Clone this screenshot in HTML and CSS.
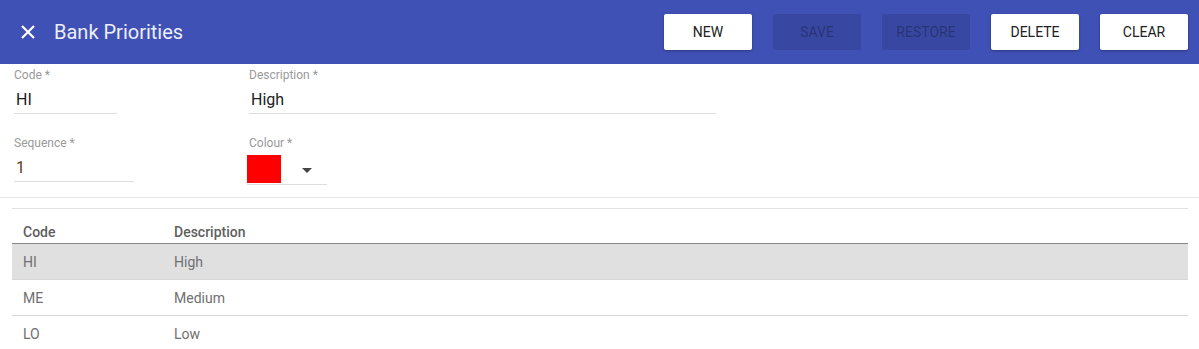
FILE: index.html
```html
<!DOCTYPE html>
<html>
<head>
<meta charset="utf-8">
<link rel="stylesheet" href="styles.css">
</head>
<body>
<header class="toolbar">
  <div class="title-wrap">
    <svg class="close-icon" width="16" height="16" viewBox="0 0 16 16"><path d="M2 2 L14 14 M14 2 L2 14" stroke="#fff" stroke-width="2.2" fill="none"/></svg>
    <span class="title">Bank Priorities</span>
  </div>
  <div class="actions">
    <button class="btn">NEW</button>
    <button class="btn disabled">SAVE</button>
    <button class="btn disabled">RESTORE</button>
    <button class="btn">DELETE</button>
    <button class="btn">CLEAR</button>
  </div>
</header>
<section class="form">
  <div class="row">
    <div class="field f-code"><label>Code *</label><div class="value">HI</div></div>
    <div class="field f-desc"><label>Description *</label><div class="value">High</div></div>
  </div>
  <div class="row">
    <div class="field f-seq"><label>Sequence *</label><div class="value">1</div></div>
    <div class="field f-colour"><label>Colour *</label>
      <div class="colour-select"><span class="swatch"></span><span class="arrow"></span></div>
    </div>
  </div>
</section>
<section class="grid">
  <div class="grid-row head"><div class="c1">Code</div><div class="c2">Description</div></div>
  <div class="grid-row selected"><div class="c1">HI</div><div class="c2">High</div></div>
  <div class="grid-row"><div class="c1">ME</div><div class="c2">Medium</div></div>
  <div class="grid-row"><div class="c1">LO</div><div class="c2">Low</div></div>
</section>
</body>
</html>
```
FILE: styles.css
```css
* { box-sizing: border-box; }
body {
  margin: 0;
  background: #fff;
  font-family: Roboto, "Liberation Sans", Arial, sans-serif;
}
.toolbar {
  height: 64px;
  background: #3f51b5;
  display: flex;
  align-items: center;
  justify-content: space-between;
  padding: 0 11px 0 20px;
}
.title-wrap { display: flex; align-items: center; }
.close-icon { display: block; }
.title {
  margin-left: 18px;
  font-size: 20px;
  color: #eceef8;
  font-weight: 400;
}
.actions { display: flex; gap: 21px; }
.btn {
  width: 88px;
  height: 36px;
  border: none;
  border-radius: 2px;
  background: #fff;
  color: #212121;
  font-family: inherit;
  font-size: 14px;
  font-weight: 400;
  box-shadow: 0 1px 3px rgba(0,0,0,0.3);
  padding: 0;
}
.btn.disabled {
  background: rgba(0,0,0,0.1);
  color: rgba(0,0,0,0.3);
  box-shadow: none;
}
.form {
  padding: 3px 0 12px 14px;
  border-bottom: 1px solid #e6e6e6;
}
.row { display: flex; }
.row + .row { margin-top: 21px; }
.field label {
  display: block;
  font-size: 12px;
  line-height: 16px;
  color: #9a9a9a;
}
.field .value {
  margin-top: 5px;
  font-size: 16px;
  line-height: 24px;
  color: #212121;
  padding: 0 0 1px 2px;
  border-bottom: 1px solid #dedede;
}
.f-code { width: 103px; margin-right: 132px; }
.f-desc { width: 467px; }
.f-seq { width: 120px; margin-right: 115px; }
.f-seq .value { color: #5a3f10; }
.f-colour { width: 80px; margin-left: -2px; }
.f-colour label { padding-left: 2px; }
.colour-select {
  margin-top: 4px;
  height: 30px;
  display: flex;
  align-items: flex-start;
  border-bottom: 1px solid #dedede;
}
.swatch {
  width: 34px;
  height: 28px;
  background: #ff0000;
}
.arrow {
  margin: 13px 0 0 21px;
  width: 0;
  height: 0;
  border-left: 5px solid transparent;
  border-right: 5px solid transparent;
  border-top: 5px solid #444;
}
.grid {
  margin: 10px 11px 0 12px;
  border-top: 1px solid #e3e3e3;
}
.grid-row {
  display: flex;
  height: 36px;
  border-bottom: 1px solid #d6d6d6;
  font-size: 14px;
  color: #707070;
  align-items: center;
}
.grid-row.head {
  height: 35px;
  align-items: flex-end;
  padding-bottom: 3px;
  border-bottom: 1px solid #888;
  font-weight: 500;
  color: #5f5f5f;
}
.grid-row.selected { background: #e0e0e0; }
.grid-row:last-child { border-bottom: none; }
.c1 { width: 151px; padding-left: 11px; }
.c2 { padding-left: 11px; }
```
